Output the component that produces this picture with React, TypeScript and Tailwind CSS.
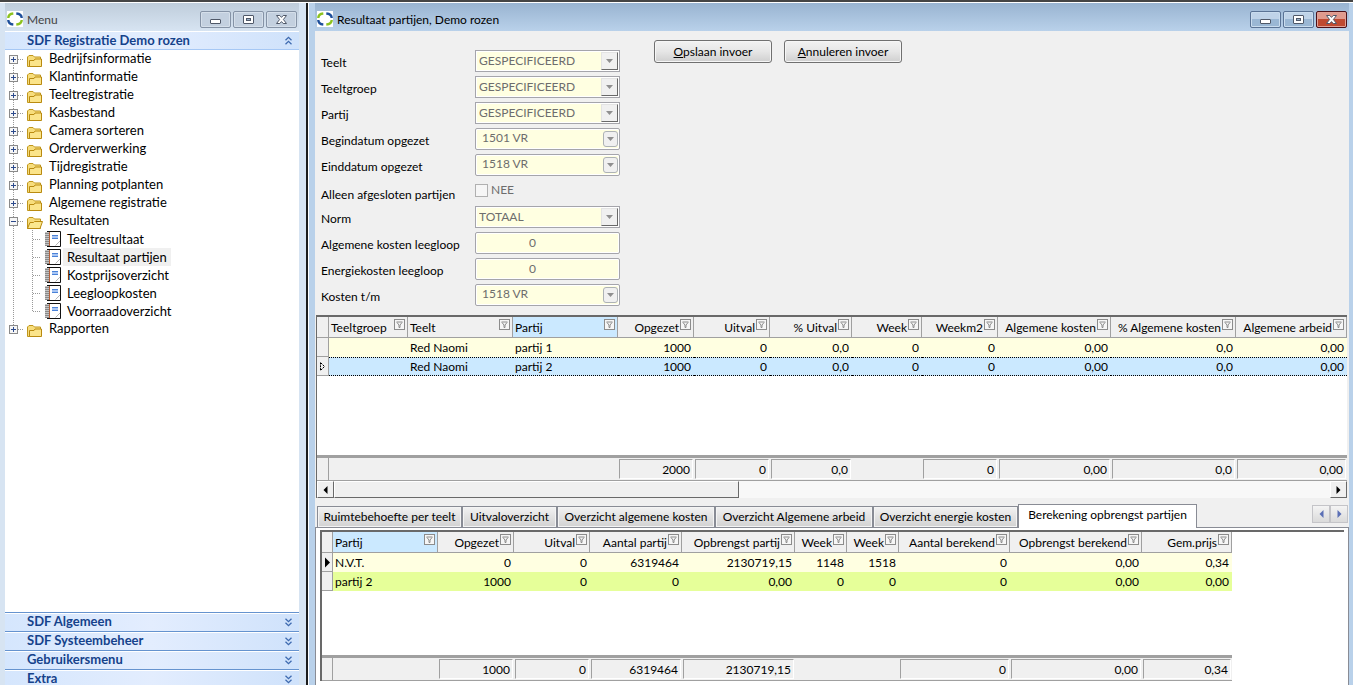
import { ReactNode } from "react";
import clsx from "clsx";

interface Column {
  title: string;
  width: string;
  left?: boolean;
  sorted?: boolean;
  total?: string;
}

interface Row {
  cells: string[];
  className: string;
  marker?: "current" | "focused";
  selected?: boolean;
}

const menuItems = [
  "Bedrijfsinformatie",
  "Klantinformatie",
  "Teeltregistratie",
  "Kasbestand",
  "Camera sorteren",
  "Orderverwerking",
  "Tijdregistratie",
  "Planning potplanten",
  "Algemene registratie",
];

const resultItems = [
  "Teeltresultaat",
  "Resultaat partijen",
  "Kostprijsoverzicht",
  "Leegloopkosten",
  "Voorraadoverzicht",
];

const menuGroups = ["SDF Algemeen", "SDF Systeembeheer", "Gebruikersmenu", "Extra"];

const partijColumns: Column[] = [
  { title: "Teeltgroep", width: "w-[79px]", left: true },
  { title: "Teelt", width: "w-[105px]", left: true },
  { title: "Partij", width: "w-[105px]", left: true, sorted: true },
  { title: "Opgezet", width: "w-[76px]", total: "2000" },
  { title: "Uitval", width: "w-[76px]", total: "0" },
  { title: "% Uitval", width: "w-[82px]", total: "0,0" },
  { title: "Week", width: "w-[70px]" },
  { title: "Weekm2", width: "w-[76px]", total: "0" },
  { title: "Algemene kosten", width: "w-[113px]", total: "0,00" },
  { title: "% Algemene kosten", width: "w-[125px]", total: "0,0" },
  { title: "Algemene arbeid", width: "w-auto", total: "0,00" },
];

const partijRows: Row[] = [
  {
    cells: ["", "Red Naomi", "partij 1", "1000", "0", "0,0", "0", "0", "0,00", "0,0", "0,00"],
    className: "bg-[#ffffe1]",
  },
  {
    cells: ["", "Red Naomi", "partij 2", "1000", "0", "0,0", "0", "0", "0,00", "0,0", "0,00"],
    className: "bg-[#cbe9ff]",
    marker: "focused",
    selected: true,
  },
];

const opbrengstColumns: Column[] = [
  { title: "Partij", width: "w-[105px]", left: true, sorted: true },
  { title: "Opgezet", width: "w-[76px]", total: "1000" },
  { title: "Uitval", width: "w-[76px]", total: "0" },
  { title: "Aantal partij", width: "w-[92px]", total: "6319464" },
  { title: "Opbrengst partij", width: "w-[113px]", total: "2130719,15" },
  { title: "Week", width: "w-[52px]" },
  { title: "Week", width: "w-[52px]" },
  { title: "Aantal berekend", width: "w-[111px]", total: "0" },
  { title: "Opbrengst berekend", width: "w-[132px]", total: "0,00" },
  { title: "Gem.prijs", width: "w-[90px]", total: "0,34" },
];

const opbrengstRows: Row[] = [
  {
    cells: ["N.V.T.", "0", "0", "6319464", "2130719,15", "1148", "1518", "0", "0,00", "0,34"],
    className: "bg-[#ffffe1]",
    marker: "current",
  },
  {
    cells: ["partij 2", "1000", "0", "0", "0,00", "0", "0", "0", "0,00", "0,00"],
    className: "bg-[#e6ff99]",
  },
];

const tabs = [
  { title: "Ruimtebehoefte per teelt", width: "w-[145px]" },
  { title: "Uitvaloverzicht", width: "w-[95px]" },
  { title: "Overzicht algemene kosten", width: "w-[158px]" },
  { title: "Overzicht Algemene arbeid", width: "w-[158px]" },
  { title: "Overzicht energie kosten", width: "w-[145px]" },
  { title: "Berekening opbrengst partijen", width: "w-[179px]", active: true },
];

function Logo() {
  return (
    <svg width="16" height="16" viewBox="0 0 16 16" className="shrink-0 bg-white" fill="none" strokeWidth="2.4">
      <path d="M1.300 7C1.300 4.300 3 2.800 6.300 2.500" stroke="#8cc21f" />
      <path d="M9.300 2.500c3.500.3 5.400 2 5.400 4.500" stroke="#1d4f9c" />
      <path d="M1.300 9c0 2.700 1.700 4.200 5 4.500" stroke="#1d4f9c" />
      <path d="M14.700 9c0 2.700-1.900 4.200-5.400 4.500" stroke="#8cc21f" />
    </svg>
  );
}

function WindowButton({ kind, active }: { kind: "min" | "max" | "close"; active?: boolean }) {
  const names = { min: "Minimaliseren", max: "Maximaliseren", close: "Sluiten" };

  return (
    <button
      aria-label={names[kind]}
      className={clsx(
        "flex h-[17px] w-[31px] items-center justify-center rounded-[2px] border inset-ring",
        !active && "border-[#8593a6] bg-[#c3d0df] inset-ring-[#d5dfea]",
        active && kind !== "close" && "border-[#5a7395] bg-linear-to-b from-[#bfd3e8] from-50% to-[#9ab7d4] to-50% inset-ring-[#c9dcee]",
        active && kind === "close" && "border-[#4d1017] bg-linear-to-b from-[#e09a8d] from-45% to-[#bf4a31] to-50% inset-ring-[#e0a196]"
      )}
    >
      <svg width="13" height="11" viewBox="0 0 13 11" stroke="#4f5868">
        {kind === "min" && <rect x="1.5" y="5.5" width="10" height="4" rx="0.5" fill="#fff" />}
        {kind === "max" && (
          <>
            <rect x="1.5" y="1.5" width="10" height="8" rx="0.5" fill="#fff" />
            <rect x="4.5" y="4.5" width="4" height="2" fill="#9ab0c8" />
          </>
        )}
        {kind === "close" && (
          <path d="M1.500 1.500h3.300l1.700 1.900 1.700-1.900h3.300L8.400 5.500l3.100 4H8.200L6.500 7.600 4.800 9.500H1.500l3.100-4z" fill="#fff" />
        )}
      </svg>
    </button>
  );
}

function TitleBar({ title, active }: { title: string; active?: boolean }) {
  return (
    <header
      className={clsx(
        "flex h-7 shrink-0 items-start bg-linear-to-b px-[2px] pt-2",
        active ? "from-[#99b4d1] to-[#b9d1ea]" : "from-[#bfcddb] to-[#d7e4f2]"
      )}
    >
      <Logo />
      <h1 className={clsx("ml-1 flex-1 leading-[17px]", active ? "text-black" : "text-[#444]")}>{title}</h1>
      <div className="flex gap-[2px]">
        <WindowButton active={active} kind="min" />
        <WindowButton active={active} kind="max" />
        <WindowButton active={active} kind="close" />
      </div>
    </header>
  );
}

function Chevrons({ up }: { up?: boolean }) {
  return (
    <svg width="9" height="9" viewBox="0 0 9 9" fill="none" stroke="#3f6bb0" strokeWidth="1.3">
      {up ? <path d="M1.500 4.300l3-3 3 3M1.500 8.300l3-3 3 3" /> : <path d="M1.500.7l3 3 3-3M1.500 4.700l3 3 3-3" />}
    </svg>
  );
}

function FolderNode({ title, open, first, last }: { title: string; open?: boolean; first?: boolean; last?: boolean }) {
  return (
    <button aria-expanded={!!open} className="flex h-[18px] items-center gap-[6px] text-left">
      <svg width="38" height="18" viewBox="0 0 38 18" fill="none">
        <g stroke="#999" strokeDasharray="1 1" shapeRendering="crispEdges">
          <path d={clsx(first ? "M8.500 9" : "M8.500 0", last ? "V9" : "V18")} />
          <path d="M13 9.500H19" />
        </g>
        <rect x="4.5" y="5.5" width="8" height="8" fill="#f6f6f6" stroke="#8a8a8a" />
        <path d="M6 9.500h5" stroke="#2c4a8c" />
        {!open && <path d="M8.500 7v5" stroke="#2c4a8c" />}
        <path d="M22.500 16.500V7l1.500-1.500h4L29.500 7h6v9.500z" fill="#f7dd7c" stroke="#c0961c" />
        {open ? (
          <path d="M22.500 16.500l2.500-6h3.500l1-1h8l-2.500 7z" fill="#fbe88f" stroke="#b98a10" />
        ) : (
          <path d="M24.500 16.500v-6H29l1-1.500h6.500v7.500z" fill="#fbe48a" stroke="#b98a10" />
        )}
      </svg>
      {title}
    </button>
  );
}

function PageNode({ title, last, selected }: { title: string; last?: boolean; selected?: boolean }) {
  return (
    <a href="#" className="flex h-[18px] items-center gap-[2px]">
      <svg width="56" height="18" viewBox="0 0 56 18" fill="none">
        <g stroke="#999" strokeDasharray="1 1" shapeRendering="crispEdges">
          <path d="M8.500 0V18" />
          <path d={last ? "M27.500 0V9" : "M27.500 0V18"} />
          <path d="M28 9.500H36" />
        </g>
        <path d="M44 1h12v16H44z" fill="#fff" />
        <path d="M42 1.500h13.500v15H42" stroke="#111" />
        <path d="M40 2h4v14h-4z" fill="#c4c4c4" />
        <path d="M40 3.500h4M40 5.500h4M40 7.500h4M40 9.500h4M40 11.500h4M40 13.500h4M40 15.500h4" stroke="#8a8a8a" />
        <path d="M44.500 2v14" stroke="#b5603a" />
        <path d="M47 5h6v4h-6z" fill="#a9c6f3" />
        <path d="M47 5.500h6M47 8.500h6" stroke="#4a82d8" />
        <path d="M50.500 15.500l4.500-4.500" stroke="#b4b4b4" />
      </svg>
      <span className={clsx("pr-1 pl-1 leading-[18px]", selected && "bg-[#f0f0f0]")}>{title}</span>
    </a>
  );
}

function MenuWindow() {
  return (
    <aside className="flex w-[308px] shrink-0 flex-col border-r-2 border-[#1c1c1c] bg-[#d7e4f2] pr-[7px] pl-[5px]">
      <TitleBar title="Menu" />
      <button className="flex h-[19px] shrink-0 items-center justify-between border-y border-t-white border-b-[#a6c8f5] bg-linear-to-r from-[#d5e6fd] via-[#e3edfe] to-[#cfe2fb] pr-[6px] pl-[22px] text-[13px] font-bold text-[#15428b]">
        SDF Registratie Demo rozen
        <Chevrons up />
      </button>
      <nav className="flex min-h-0 flex-1 flex-col bg-white text-[13px]">
        {menuItems.map((item, i) => (
          <FolderNode key={item} first={i === 0} title={item} />
        ))}
        <FolderNode open title="Resultaten" />
        {resultItems.map((item, i) => (
          <PageNode
            key={item}
            last={i === resultItems.length - 1}
            selected={item === "Resultaat partijen"}
            title={item}
          />
        ))}
        <FolderNode last title="Rapporten" />
      </nav>
      <div className="-mb-[3px] shrink-0 text-[13px]">
        {menuGroups.map((group) => (
          <button
            key={group}
            className="flex h-[19px] w-full items-center justify-between border-t border-[#6593cf] bg-linear-to-r from-[#d5e6fd] via-[#e3edfe] to-[#cfe2fb] pr-[6px] pl-[22px] font-bold text-[#15428b] inset-shadow-[0_1px_0_#fff]"
          >
            {group}
            <Chevrons />
          </button>
        ))}
      </div>
    </aside>
  );
}

function Field({ id, label, children }: { id: string; label: string; children: ReactNode }) {
  return (
    <div className="flex h-[26px] items-start">
      <label className="w-[154px] leading-[25px]" htmlFor={id}>
        {label}
      </label>
      {children}
    </div>
  );
}

const boxClass =
  "h-[22px] w-[145px] appearance-none border border-[#a5a5ab] bg-[#ffffe1] text-[#6d6d6d] inset-ring inset-ring-white";

function SelectField({ id, label, value, date }: { id: string; label: string; value: string; date?: boolean }) {
  return (
    <Field id={id} label={label}>
      <div className="relative">
        <select
          disabled
          className={clsx(boxClass, "block", date ? "rounded-[2px] pb-[2px] pl-[6px]" : "pl-[3px]")}
          defaultValue={value}
          id={id}
        >
          <option>{value}</option>
        </select>
        <span
          className={clsx(
            "pointer-events-none absolute flex items-center justify-center bg-[#f0f0f0]",
            date
              ? "top-[3px] right-[2px] h-4 w-[15px] rounded-[3px] border border-[#adb2b5]"
              : "top-[2px] right-[2px] h-[18px] w-[17px] border border-t-[#e3e3e3] border-r-[#696969] border-b-[#696969] border-l-[#e3e3e3]"
          )}
        >
          <svg width="7" height="4" viewBox="0 0 7 4">
            <path d="M0 0h7L3.500 4z" fill="#8f8f8f" />
          </svg>
        </span>
      </div>
    </Field>
  );
}

function NumberField({ id, label }: { id: string; label: string }) {
  return (
    <Field id={id} label={label}>
      <input disabled className={clsx(boxClass, "rounded-[2px] pr-[30px] pb-[2px] text-center")} defaultValue="0" id={id} type="text" />
    </Field>
  );
}

function FilterForm() {
  const buttonClass =
    "h-[23px] w-[118px] rounded-[3px] border border-[#707070] bg-linear-to-b from-[#f2f2f2] via-[#e6e6e6] to-[#cfcfcf] text-black inset-ring inset-ring-[#f6f6f6]";

  return (
    <form className="flex gap-[34px] pt-[19px] pl-[6px]">
      <div className="pb-[5px]">
        <SelectField id="teelt" label="Teelt" value="GESPECIFICEERD" />
        <SelectField id="teeltgroep" label="Teeltgroep" value="GESPECIFICEERD" />
        <SelectField id="partij" label="Partij" value="GESPECIFICEERD" />
        <SelectField date id="begindatum" label="Begindatum opgezet" value="1501 VR" />
        <SelectField date id="einddatum" label="Einddatum opgezet" value="1518 VR" />
        <div className="flex h-[26px] items-start">
          <label className="w-[154px] pt-[2px] leading-[25px]" htmlFor="afgesloten">
            Alleen afgesloten partijen
          </label>
          <div className="flex h-5 items-center gap-[3px] text-[#6d6d6d]">
            <input disabled className="size-[13px] appearance-none border border-[#b0b0b0] bg-[#f6f6f6]" id="afgesloten" type="checkbox" />
            NEE
          </div>
        </div>
        <SelectField id="norm" label="Norm" value="TOTAAL" />
        <NumberField id="algemeen" label="Algemene kosten leegloop" />
        <NumberField id="energie" label="Energiekosten leegloop" />
        <SelectField date id="kosten" label="Kosten t/m" value="1518 VR" />
      </div>
      <div className="-mt-[10px] flex items-start gap-3">
        <button className={buttonClass} type="button">
          <u>O</u>pslaan invoer
        </button>
        <button className={buttonClass} type="button">
          <u>A</u>nnuleren invoer
        </button>
      </div>
    </form>
  );
}

function FilterIcon() {
  return (
    <svg width="11" height="11" viewBox="0 0 11 11" className="mt-px shrink-0" fill="none" stroke="#8c8c8c">
      <rect x="0.5" y="0.5" width="10" height="10" fill="#f6f6f6" />
      <path d="M2.500 3h6M3 3.500l2 2.500v2.500h1V6l2-2.500" />
    </svg>
  );
}

function Columns({ columns, marker }: { columns: Column[]; marker: string }) {
  return (
    <colgroup>
      <col className={marker} />
      {columns.map((column, i) => (
        <col key={i} className={column.width} />
      ))}
    </colgroup>
  );
}

interface DataGridProps {
  columns: Column[];
  rows: Row[];
  width: string;
  marker: string;
}

function DataGrid({ columns, rows, width, marker }: DataGridProps) {
  return (
    <table className={clsx("shrink-0 table-fixed border-separate border-spacing-0 whitespace-nowrap", width)}>
      <Columns columns={columns} marker={marker} />
      <thead>
        <tr className="bg-[#f0f0f0]">
          <th className="border-r border-b border-[#a0a0a0] p-0" />
          {columns.map((column, i) => (
            <th
              key={i}
              className={clsx("border-r border-b border-[#a0a0a0] p-0 font-normal", column.sorted && "bg-[#cbe9ff]")}
            >
              <div
                className={clsx(
                  "flex h-5 items-start gap-px pt-px pr-[2px] pl-[2px]",
                  column.left ? "justify-between" : "justify-end"
                )}
              >
                <span className="leading-5">{column.title}</span>
                <FilterIcon />
              </div>
            </th>
          ))}
        </tr>
      </thead>
      <tbody>
        {rows.map((row, i) => (
          <tr key={i} className={row.className}>
            <td className="h-[19px] border-r border-b border-[#a0a0a0] bg-[#f0f0f0] p-0">
              {row.marker && (
                <svg width="7" height="11" viewBox="0 0 7 11" className="mx-auto">
                  {row.marker === "current" ? (
                    <path d="M1 0.500v10l5-5z" fill="#000" />
                  ) : (
                    <path d="M1.500 1.500v8l4-4z" fill="none" stroke="#000" strokeDasharray="2 .8" />
                  )}
                </svg>
              )}
            </td>
            {row.cells.map((cell, c) => (
              <td
                key={c}
                className={clsx(
                  "h-[19px] py-0 pr-[3px] pl-[2px] leading-[17px]",
                  !columns[c].left && "text-right",
                  row.selected && "border-y border-dotted border-black"
                )}
              >
                {cell}
              </td>
            ))}
          </tr>
        ))}
      </tbody>
    </table>
  );
}

function Totals({ columns, width, marker }: { columns: Column[]; width: string; marker: string }) {
  return (
    <table
      className={clsx(
        "shrink-0 table-fixed border-separate border-spacing-0 border-t-3 border-b border-[#a0a0a0] bg-[#f0f0f0]",
        width
      )}
    >
      <Columns columns={columns} marker={marker} />
      <tbody>
        <tr>
          <td className="h-[22px] border-r border-[#a0a0a0] p-0" />
          {columns.map((column, i) => (
            <td key={i} className="p-0 pl-px text-right">
              {column.total && (
                <div className="mr-px h-5 border border-t-[#a0a0a0] border-r-white border-b-white border-l-[#a0a0a0] pr-[2px] leading-[19px]">
                  {column.total}
                </div>
              )}
            </td>
          ))}
        </tr>
      </tbody>
    </table>
  );
}

function Arrow({ right, color }: { right?: boolean; color: string }) {
  return (
    <svg width="5" height="8" viewBox="0 0 5 8">
      <path d={right ? "M0.500 0v8l4-4z" : "M4.500 0v8l-4-4z"} fill={color} />
    </svg>
  );
}

function ScrollBar() {
  const buttonClass =
    "flex w-[17px] items-center justify-center border border-t-white border-r-[#696969] border-b-[#696969] border-l-white bg-[#f0f0f0]";

  return (
    <div className="flex h-[17px] shrink-0 bg-[#f8f8f8]">
      <button aria-label="Naar links" className={buttonClass}>
        <Arrow color="#000" />
      </button>
      <div className="flex-1">
        <div className="h-full w-[405px] border border-t-white border-r-[#696969] border-b-[#696969] border-l-white bg-[#f0f0f0]" />
      </div>
      <button aria-label="Naar rechts" className={buttonClass}>
        <Arrow right color="#000" />
      </button>
    </div>
  );
}

function TabBar() {
  const scrollClass =
    "flex h-[18px] w-[18px] items-center justify-center border border-[#c4c4c8] bg-linear-to-b from-[#f4f4f4] to-[#dadada]";

  return (
    <div className="flex h-6 shrink-0 items-end pl-[2px] whitespace-nowrap" role="tablist">
      {tabs.map((tab) => (
        <button
          key={tab.title}
          aria-selected={!!tab.active}
          className={clsx(
            "border border-b-0 border-[#898c95]",
            tab.width,
            tab.active
              ? "z-10 -mb-px h-6 bg-white pb-[3px]"
              : "h-[21px] bg-linear-to-b from-[#f2f2f2] to-[#d2d2d2] inset-ring inset-ring-[#f4f4f4]"
          )}
          role="tab"
        >
          {tab.title}
        </button>
      ))}
      <div className="mb-1 ml-auto flex pr-px">
        <button aria-label="Vorige tab" className={scrollClass}>
          <Arrow color="#5b6fb5" />
        </button>
        <button aria-label="Volgende tab" className={scrollClass}>
          <Arrow right color="#5b6fb5" />
        </button>
      </div>
    </div>
  );
}

function ResultWindow() {
  return (
    <main className="flex min-w-0 flex-1 flex-col border-l border-white bg-[#b9d1ea] pr-1 pl-[6px]">
      <TitleBar active title="Resultaat partijen, Demo rozen" />
      <div className="flex min-h-0 flex-1 flex-col bg-[#f0f0f0]">
        <FilterForm />
        <section className="mr-[2px] ml-px flex shrink-0 flex-col overflow-hidden border-t-2 border-l border-[#696969] bg-white">
          <DataGrid columns={partijColumns} marker="w-3" rows={partijRows} width="w-full" />
          <div className="h-[79px]" />
          <Totals columns={partijColumns} marker="w-3" width="w-full" />
          <ScrollBar />
        </section>
        <div className="mt-[5px] flex min-h-0 flex-1 flex-col">
          <TabBar />
          <section className="flex min-h-0 flex-1 flex-col border border-b-0 border-[#898c95] bg-white px-1 pt-[2px] pb-1">
            <div className="flex min-h-0 flex-1 flex-col overflow-hidden border-t-2 border-l-2 border-[#696969]">
              <DataGrid columns={opbrengstColumns} marker="w-[11px]" rows={opbrengstRows} width="w-[910px]" />
              <div className="flex-1" />
              <Totals columns={opbrengstColumns} marker="w-[11px]" width="w-[910px]" />
            </div>
          </section>
        </div>
      </div>
    </main>
  );
}

export default function App() {
  return (
    <div className="flex h-screen overflow-hidden border-t-2 border-[#454545] bg-[#b9d1ea] font-['Lato',sans-serif] text-[12px] text-black">
      <div className="flex min-w-0 flex-1 border-t border-white">
        <MenuWindow />
        <ResultWindow />
      </div>
    </div>
  );
}
